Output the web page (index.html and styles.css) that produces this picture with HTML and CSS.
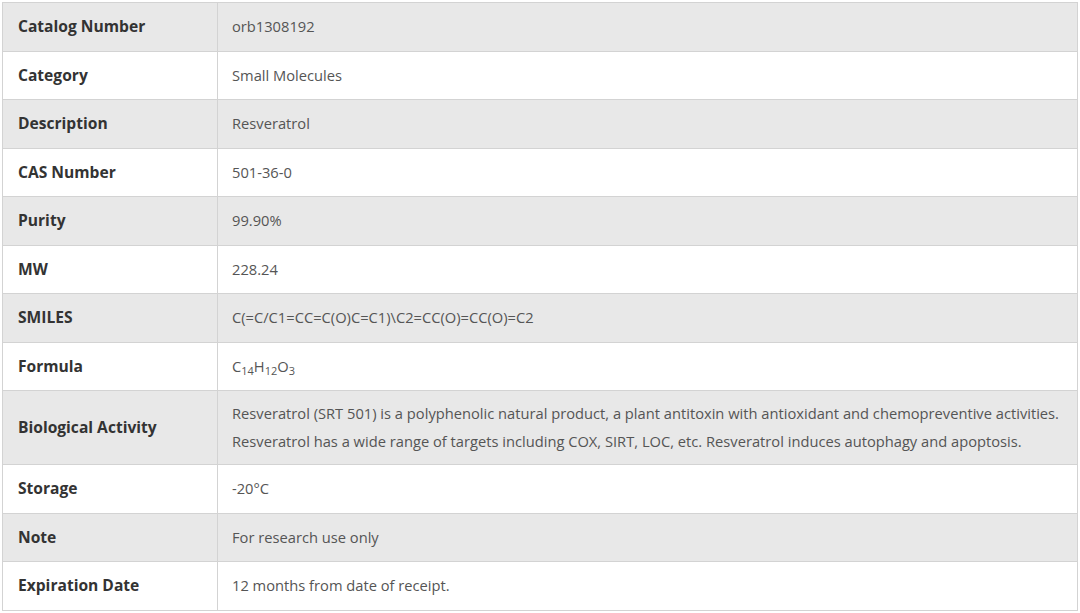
FILE: index.html
```html
<!DOCTYPE html>
<html>
<head>
<meta charset="utf-8">
<link rel="stylesheet" href="styles.css">
</head>
<body>
<table class="spec">
  <tr class="odd"><th>Catalog Number</th><td>orb1308192</td></tr>
  <tr><th>Category</th><td>Small Molecules</td></tr>
  <tr class="odd"><th>Description</th><td>Resveratrol</td></tr>
  <tr><th>CAS Number</th><td>501-36-0</td></tr>
  <tr class="odd"><th>Purity</th><td>99.90%</td></tr>
  <tr><th>MW</th><td>228.24</td></tr>
  <tr class="odd"><th>SMILES</th><td>C(=C/C1=CC=C(O)C=C1)\C2=CC(O)=CC(O)=C2</td></tr>
  <tr><th>Formula</th><td>C<sub>14</sub>H<sub>12</sub>O<sub>3</sub></td></tr>
  <tr class="odd"><th>Biological Activity</th><td>Resveratrol (SRT 501) is a polyphenolic natural product, a plant antitoxin with antioxidant and chemopreventive activities. Resveratrol has a wide range of targets including COX, SIRT, LOC, etc. Resveratrol induces autophagy and apoptosis.</td></tr>
  <tr><th>Storage</th><td>-20°C</td></tr>
  <tr class="odd"><th>Note</th><td>For research use only</td></tr>
  <tr><th>Expiration Date</th><td>12 months from date of receipt.</td></tr>
</table>
</body>
</html>
```
FILE: styles.css
```css
html, body {
  margin: 0;
  padding: 0;
  background: #ffffff;
}
body {
  padding: 2px;
  font-family: "Open Sans", "Liberation Sans", sans-serif;
  font-size: 14.7px;
}
.spec {
  width: 1076px;
  border-collapse: collapse;
  border: 1px solid #d3d3d3;
}
.spec tr {
  height: 48.5px;
}
.spec th, .spec td {
  border: 1px solid #d3d3d3;
  padding: 8px 15px 9px;
  line-height: 28px;
  text-align: left;
  vertical-align: middle;
}
.spec th {
  width: 184px;
  padding-left: 15px;
  font-size: 15.6px;
  font-weight: 700;
  color: #333333;
}
.spec td {
  color: #555555;
  padding-left: 14px;
  padding-right: 10px;
}
.spec tr.odd th, .spec tr.odd td {
  background: #e8e8e8;
}
.spec sub {
  font-size: 11px;
  line-height: 0;
  vertical-align: -3px;
}
```
